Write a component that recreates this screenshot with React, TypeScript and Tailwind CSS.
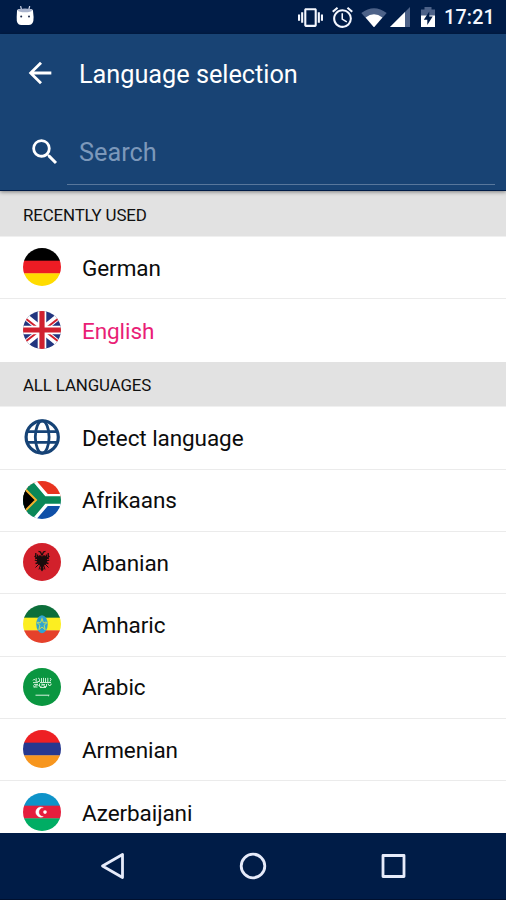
import React, { useState } from 'react';
import { MdAccessAlarm, MdArrowBack, MdSearch, MdVibration } from 'react-icons/md';

interface Language {
  name: string;
  icon: React.ReactNode;
}

const Flag: React.FC<{ children: React.ReactNode }> = ({ children }) => (
  <svg className="w-[38px] h-[38px] rounded-full shrink-0" viewBox="0 0 38 38">
    {children}
  </svg>
);

const Stripes: React.FC<{ colors: string[]; children?: React.ReactNode }> = ({ colors, children }) => (
  <Flag>
    {colors.map((color, i) => (
      <rect key={color} y={i * 12.67} width="38" height="13" fill={color} />
    ))}
    {children}
  </Flag>
);

const UnitedKingdom = () => (
  <Flag>
    <rect width="38" height="38" fill="#22357f" />
    <path d="M-2 2L40 36M-2 36L40 2" stroke="#fff" strokeWidth="6.5" />
    <path d="M-2 4L18 19.5M40 34L20 18.5M-2 34L18 18.5M40 4L20 19.5" stroke="#d0202e" strokeWidth="2" />
    <path d="M19 0v38M0 19h38" stroke="#fff" strokeWidth="8.6" />
    <path d="M19 0v38M0 19h38" stroke="#d0202e" strokeWidth="5.2" />
  </Flag>
);

const SouthAfrica = () => (
  <Flag>
    <rect width="38" height="19" fill="#e8331f" />
    <rect y="19" width="38" height="19" fill="#1050a8" />
    <path d="M4 -2L22 19L4 40M20 19H38" stroke="#fff" strokeWidth="12" fill="none" />
    <path d="M-6 -7L19 19L-6 45Z" fill="#0a8758" />
    <path d="M1 -4L20.5 19L1 42M19 19H38" stroke="#0a8758" strokeWidth="7.6" fill="none" />
    <path d="M-2 4L13 19L-2 34Z" fill="#000" stroke="#f0b22c" strokeWidth="2" />
  </Flag>
);

const Albania = () => (
  <Flag>
    <rect width="38" height="38" fill="#d2202b" />
    {/* double-headed eagle */}
    <g stroke="#1a0c0c" fill="none" strokeWidth="1.3">
      <path d="M19 12.5L17.5 9L15.5 8.4M19 12.5L20.5 9L22.5 8.4" />
      <path d="M12.8 10v6M14.6 11.5v8M25.2 10v6M23.4 11.5v8M11.6 13l4 4M26.4 13l-4 4M11.8 17l4 1.5M26.2 17l-4 1.5M12.5 20.5l4-1M25.5 20.5l-4-1" />
      <path d="M16.5 20.5l-4 4M21.5 20.5l4 4M17.5 22l-1.5 4.5M20.5 22l1.5 4.5" strokeWidth="1" />
    </g>
    <path d="M14 14l3-2 2 1.5 2-1.5 3 2-.5 6-2.5 2.5-1 2 .8 1.5L19 28.5 17.2 26l.8-1.5-1-2-2.5-2.5z" fill="#1a0c0c" />
  </Flag>
);

const Ethiopia = () => (
  <Stripes colors={['#0b6e3a', '#fcee21', '#e5412b']}>
    <ellipse cx="19" cy="19.2" rx="5.7" ry="9" fill="#2fa4d2" />
    <path d="M19 13.6l1.4 4.1h3.5l-2.8 2.6 1.1 4.4-3.2-2.7-3.2 2.7 1.1-4.4-2.8-2.6h3.5z" fill="none" stroke="#c9df58" strokeWidth="1" />
    <path d="M19 12.5v3M14.5 16l2 1.8M23.5 16l-2 1.8" stroke="#a6d07a" strokeWidth=".6" />
  </Stripes>
);

const SaudiArabia = () => (
  <Flag>
    <rect width="38" height="38" fill="#0a9640" />
    <g stroke="#cdeed6" strokeWidth="1" fill="none">
      <path d="M10 12.5q1.5-3 2.3 0M13.2 10v4.5M15 10.5q2-1 1.5 3h-2M18.5 10v4M20.5 9.8v4.4M22.5 10v4.2M24.8 9.8v4.5M27 10q2 1 0 3.5M10 14.6h5M17 14.5h11" />
      <path d="M10 17.5q1.5 2.5 3 0t2.5.6M16.5 15.5v3q1.5 1 2.5-1v-2M21 16v2.5h2.5v-2.5M25 15.5q.5 3.5 3 1.5v-1.5M10.5 19h4M17 19.5h6M11 16.6h4M19 16.6h3" />
    </g>
    <path d="M12.5 27.2h13.7l-1 .9" stroke="#d9f2df" strokeWidth="1" fill="none" />
  </Flag>
);

const Azerbaijan = () => (
  <Stripes colors={['#0e93c9', '#e51e3d', '#00ad64']}>
    <path d="M20.3 14.6A5.1 5.1 0 1 0 20.3 23.6A4.5 4.5 0 1 1 20.3 14.6Z" fill="#fff" stroke="#fff" strokeWidth=".4" />
    <circle cx="22" cy="19.1" r="1.8" fill="#fff" />
  </Stripes>
);

const Globe = () => (
  <svg className="w-[38px] h-[38px] shrink-0" viewBox="0 0 38 38" fill="none" stroke="#164376" strokeWidth="3.2">
    <circle cx="19.2" cy="19" r="16.1" />
    <ellipse cx="19.2" cy="19" rx="6.9" ry="16.1" strokeWidth="2.8" />
    <path d="M5 13.7h28.4M5 24.3h28.4" strokeWidth="2.8" />
  </svg>
);

const recentLanguages: Language[] = [
  { name: 'German', icon: <Stripes colors={['#000000', '#ed1c24', '#ffdc00']} /> },
  { name: 'English', icon: <UnitedKingdom /> },
];

const allLanguages: Language[] = [
  { name: 'Detect language', icon: <Globe /> },
  { name: 'Afrikaans', icon: <SouthAfrica /> },
  { name: 'Albanian', icon: <Albania /> },
  { name: 'Amharic', icon: <Ethiopia /> },
  { name: 'Arabic', icon: <SaudiArabia /> },
  { name: 'Armenian', icon: <Stripes colors={['#ee2024', '#27388f', '#f7961e']} /> },
  { name: 'Azerbaijani', icon: <Azerbaijan /> },
];

const StatusBar = () => (
  <div className="h-[34px] shrink-0 bg-[#001c47] flex items-center text-[#f4f7ff]">
    <svg className="w-[18px] h-[20px] ml-4 -mt-[2px]" viewBox="0 0 18 20">
      <path d="M4.6 0l1 4M13.7 0l-1 4" stroke="#cdd5e8" strokeWidth="1.2" />
      <path d="M1 5q0-2 3-2h10q3 0 3 2l.6 6q.2 8-4.6 8H5Q.2 19 .7 11z" fill="#fff" />
      <ellipse cx="9" cy="4.4" rx="7" ry="1.9" fill="#a9b3cc" />
      <circle cx="5.2" cy="10.5" r="1" fill="#1c2a4c" />
      <circle cx="13" cy="10.5" r="1" fill="#1c2a4c" />
    </svg>
    <MdVibration className="w-[25px] h-[25px] ml-auto" />
    <MdAccessAlarm className="w-[25px] h-[25px] ml-[7px]" />
    <svg className="w-[26px] h-[20px] ml-[6px]" viewBox="0 0 26 20">
      <path d="M0.3 6Q13-3.5 25.7 6L13 20.3z" fill="#4d6288" />
      <path d="M4.6 10.5Q13 4 21.4 10.5L13 20.3z" fill="#fff" />
    </svg>
    <svg className="w-[20px] h-[20px] ml-[3px]" viewBox="0 0 20 20">
      <path d="M20 0v20H0z" fill="#4d6288" />
      <path d="M15 5v15H0z" fill="#fff" />
    </svg>
    <svg className="w-[14px] h-[20px] ml-[11px]" viewBox="0 0 14 20">
      <path d="M3.5 0h7v2.5H14V9H0V2.5h3.5z" fill="#4d6288" />
      <path d="M0 8.5h14V20H0z" fill="#fff" />
      <path d="M8.3 4.5L2.8 12.8h3.5v5.2l5.4-8.5H8.3z" fill="#001c47" />
    </svg>
    <span className="ml-[9px] w-[62px] text-[19.7px] leading-none font-medium tracking-[0.2px] mt-[2px]">17:21</span>
  </div>
);

const SectionHeader: React.FC<{ title: string }> = ({ title }) => (
  <h2 className="h-[45.6px] shrink-0 bg-[#e2e2e2] border-b border-[#f0f0f0] pl-[23px] pt-[3px] flex items-center text-[16.9px] tracking-[-0.15px] text-[#111]">
    {title}
  </h2>
);

const App: React.FC = () => {
  const [selected, setSelected] = useState('English');
  const [query, setQuery] = useState('');

  const renderRow = ({ name, icon }: Language) => (
    <li key={name} className="h-[62.35px] shrink-0 border-b border-[#ebebeb] last:border-b-0">
      <button className="w-full h-full pl-[23px] pb-[1px] flex items-center gap-[21px] text-left" onClick={() => setSelected(name)}>
        {icon}
        <span className={name === selected ? 'pt-[3px] text-[#e91e76]' : 'pt-[3px] text-[#0c0c0c]'}>{name}</span>
      </button>
    </li>
  );

  return (
    <div className="w-[506px] h-[900px] overflow-hidden flex flex-col bg-white font-[Roboto,sans-serif]">
      <StatusBar />

      {/* app bar */}
      <header className="h-[157px] shrink-0 bg-[#184374] border-b border-[#001c47] text-white shadow-[0_1px_4px_rgba(0,0,0,0.45)] relative">
        <div className="h-[79px] flex items-center pl-[22.5px]">
          <MdArrowBack className="w-[34px] h-[34px] -mt-[2px]" />
          <h1 className="ml-[22.5px] mt-[2px] text-[25.3px] tracking-[-0.03px]">Language selection</h1>
        </div>
        <div className="h-[72px] flex items-center pl-[28px] pr-[11px]">
          <MdSearch className="w-[34px] h-[34px] mt-[6px]" />
          <input
            className="ml-[5px] h-full flex-1 border-b border-[#58779c] pl-[12px] pt-[7px] text-[25.3px] outline-none placeholder:text-[#7c98ba]"
            placeholder="Search"
            value={query}
            onChange={(e) => setQuery(e.target.value)}
          />
        </div>
      </header>

      {/* language list */}
      <main className="flex-1 min-h-0 overflow-hidden flex flex-col pt-[0.4px] bg-[#e2e2e2] text-[22.5px] tracking-[-0.08px]">
        <SectionHeader title="RECENTLY USED" />
        <ul className="shrink-0 bg-white">{recentLanguages.map(renderRow)}</ul>
        <SectionHeader title="ALL LANGUAGES" />
        <ul className="shrink-0 bg-white">{allLanguages.map(renderRow)}</ul>
      </main>

      {/* navigation bar */}
      <nav className="h-[67px] shrink-0 bg-[#001c47] border-b border-[#00102e] flex items-center justify-center gap-[112px] text-[#e6ebfa]">
        <svg className="w-[28px] h-[28px]" viewBox="0 0 28 28" fill="none" stroke="currentColor" strokeWidth="2.8" strokeLinejoin="round">
          <path d="M23.5 2.5v23L3.5 14z" />
        </svg>
        <svg className="w-[28px] h-[28px]" viewBox="0 0 28 28" fill="none" stroke="currentColor" strokeWidth="2.8">
          <circle cx="14" cy="14" r="11.8" />
        </svg>
        <svg className="w-[28px] h-[28px]" viewBox="0 0 28 28" fill="none" stroke="currentColor" strokeWidth="2.8" strokeLinejoin="round">
          <rect x="4" y="3.5" width="21" height="21" />
        </svg>
      </nav>
    </div>
  );
};

export default App;
